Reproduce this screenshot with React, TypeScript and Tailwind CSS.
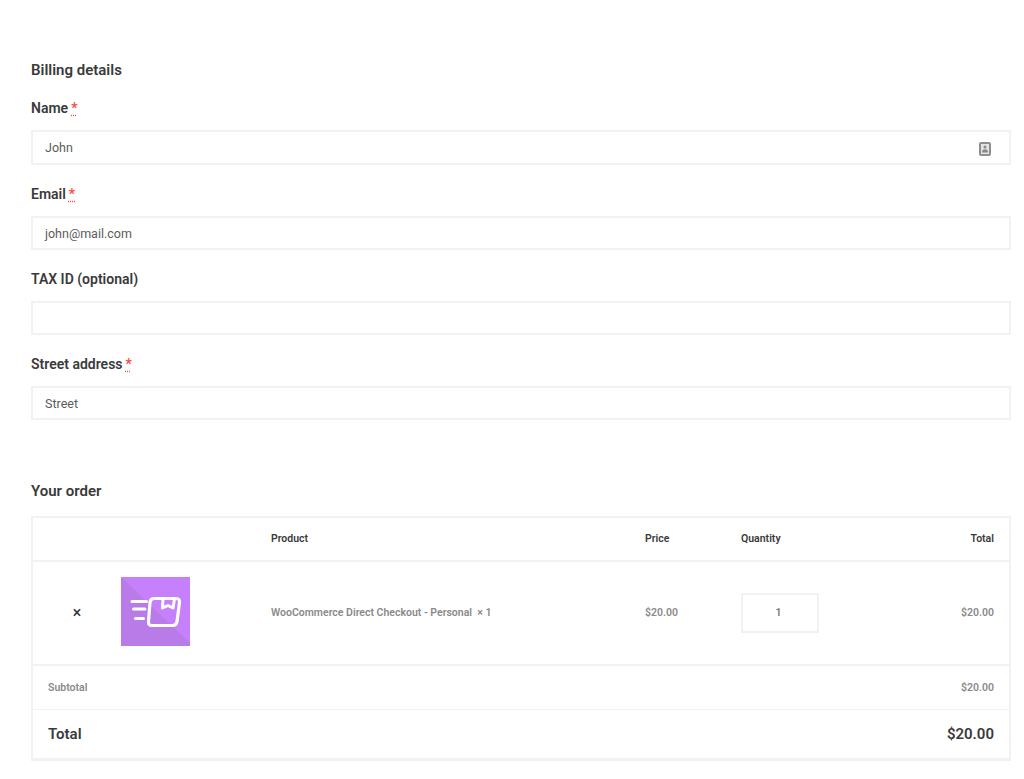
const font = "font-['Roboto',sans-serif]";

function Required() {
  return (
    <span className="ml-[3px] text-[#ff4a3d] underline decoration-dotted decoration-[#ff4a3d] underline-offset-2">*</span>
  );
}

function Field({ label, required, value, icon, boxH, mb }: { label: string; required?: boolean; value?: string; icon?: boolean; boxH: string; mb: string }) {
  return (
    <div className={mb}>
      <div className="mb-[12px] h-[20px] text-[14px] leading-[20px] font-semibold text-[#3a3a3a]">
        {label}
        {required && <Required />}
      </div>
      <div className={`${boxH} flex items-center justify-between border-2 border-[#f2f2f2] pt-[2px] pr-[18px] pl-[12px] text-[12.5px] text-[#5c5c5c]`}>
        <span>{value}</span>
        {icon && (
          <svg width="12" height="14" viewBox="0 0 12 14">
            <rect width="12" height="14" rx="2" fill="#8f8f8f" />
            <rect x="2" y="2" width="8" height="10" fill="#e4e4e4" />
            <circle cx="6" cy="5" r="1.500" fill="#8a8a8a" />
            <path d="M3 10.500c0-2.300 1.200-3.300 3-3.300s3 1 3 3.300z" fill="#8a8a8a" />
          </svg>
        )}
      </div>
    </div>
  );
}

function ProductImage() {
  return (
    <svg width="69" height="69" viewBox="0 0 69 69" className="mb-[3px]">
      <rect width="69" height="69" fill="#c680fb" />
      <path d="M0 0L69 66V69H0z" fill="#b87be8" />
      <path d="M11 24.500H25.500M12.500 32H24M14.500 41.500H22.500" stroke="#fff" strokeWidth="3" strokeLinecap="round" fill="none" />
      <path d="M33 21.500H55Q59 21.500 58.500 25.500L56 44.500Q55.500 48.500 51.500 48.500H31Q27 48.500 27.500 44.500L29 25.500Q29.500 21.500 33 21.500Z" stroke="#fff" strokeWidth="3.200" fill="none" />
      <path d="M42 22L41.500 31L47 28.500L52 31L53.500 22" stroke="#fff" strokeWidth="3" strokeLinejoin="round" fill="none" />
    </svg>
  );
}

const cols = "grid grid-cols-[88px_150px_374px_96px_1fr] items-center";

export default function App() {
  return (
    <div className={`${font} min-h-[779px] bg-white pt-[60px] pr-[13px] pl-[31px]`}>
      <h3 className="mb-[18px] h-[20px] text-[15px] leading-[20px] font-semibold text-[#3a3a3a]">Billing details</h3>
      <Field label="Name" required value="John" icon boxH="h-[35px]" mb="mb-[19px]" />
      <Field label="Email" required value="john@mail.com" boxH="h-[34px]" mb="mb-[19px]" />
      <Field label="TAX ID (optional)" boxH="h-[34px]" mb="mb-[19px]" />
      <Field label="Street address" required value="Street" boxH="h-[34px]" mb="mb-[61px]" />

      <h3 className="mb-[15px] h-[20px] text-[15px] leading-[20px] font-semibold text-[#3a3a3a]">Your order</h3>
      <div className="border-2 border-b-[3px] border-[#f2f2f2]">
        <div className={`${cols} h-[44px] border-b-2 border-[#f2f2f2] text-[10.500px] font-semibold text-[#3a3a3a]`}>
          <span />
          <span />
          <span>Product</span>
          <span>Price</span>
          <span className="flex justify-between pr-[15px]">
            <span>Quantity</span>
            <span>Total</span>
          </span>
        </div>
        <div className={`${cols} h-[104px] border-b-2 border-[#f2f2f2] text-[10.500px] font-semibold text-[#8a8a8a]`}>
          <span className="text-center text-[16px] leading-none font-medium text-[#333]">×</span>
          <ProductImage />
          <span>WooCommerce Direct Checkout - Personal&nbsp; × 1</span>
          <span>$20.00</span>
          <span className="flex items-center justify-between pr-[15px]">
            <span className="flex h-[40px] w-[78px] items-center justify-center border-2 border-[#f2f2f2] pr-[3px] text-[#7a7a7a]">1</span>
            <span>$20.00</span>
          </span>
        </div>
        <div className="flex h-[44px] items-center justify-between border-b border-[#f2f2f2] px-[15px] text-[10.500px] font-semibold text-[#8a8a8a]">
          <span>Subtotal</span>
          <span>$20.00</span>
        </div>
        <div className="flex h-[48px] items-center justify-between px-[15px] text-[15px] font-semibold text-[#3a3a3a]">
          <span>Total</span>
          <span>$20.00</span>
        </div>
      </div>
    </div>
  );
}
